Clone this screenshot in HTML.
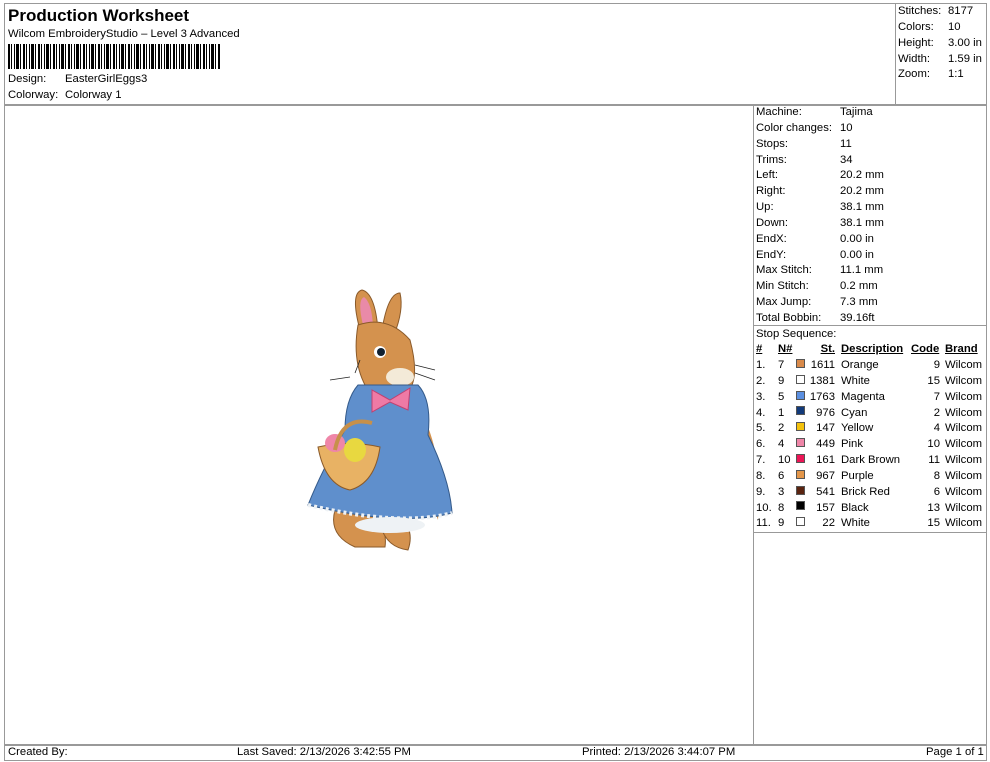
<!DOCTYPE html>
<html><head><meta charset="utf-8"><style>
body{margin:0;width:990px;height:762px;background:#fff;position:relative;font-family:"Liberation Sans",Arial,sans-serif;font-size:11.3px;color:#000;overflow:hidden}
.a{position:absolute;white-space:nowrap;line-height:13px}
.l{position:absolute;background:#999}
.r{text-align:right}
.u{text-decoration:underline;font-weight:bold}
.sw{position:absolute;width:9px;height:9px;border:1px solid #555;box-sizing:border-box}
</style></head><body>
<div class="l" style="left:4px;top:3px;width:983px;height:1px"></div>
<div class="l" style="left:4px;top:3px;width:1px;height:758px"></div>
<div class="l" style="left:986px;top:3px;width:1px;height:758px"></div>
<div class="l" style="left:4px;top:104px;width:983px;height:2px"></div>
<div class="l" style="left:895px;top:3px;width:1px;height:101px"></div>
<div class="l" style="left:753px;top:104px;width:1px;height:640px"></div>
<div class="l" style="left:753px;top:325px;width:233px;height:1px"></div>
<div class="l" style="left:753px;top:532px;width:233px;height:1px"></div>
<div class="l" style="left:4px;top:744px;width:983px;height:2px"></div>
<div class="l" style="left:4px;top:760px;width:983px;height:1px"></div>

<div class="a" style="left:8px;top:7px;font-size:17px;font-weight:bold;line-height:18px">Production Worksheet</div>
<div class="a" style="left:8px;top:28px">Wilcom EmbroideryStudio – Level 3 Advanced</div>
<div class="a" style="left:8px;top:44px;width:212px;height:25px;background:repeating-linear-gradient(90deg,#000 0 2px,#fff 2px 3px,#000 3px 4px,#fff 4px 6px,#000 6px 7px,#fff 7px 8px,#000 8px 11px,#fff 11px 12px,#000 12px 13px,#fff 13px 15px)"></div>
<div class="a" style="left:8px;top:73px">Design:</div><div class="a" style="left:65px;top:73px">EasterGirlEggs3</div>
<div class="a" style="left:8px;top:89px">Colorway:</div><div class="a" style="left:65px;top:89px">Colorway 1</div>

<div class="a" style="left:898px;top:5px">Stitches:</div><div class="a" style="left:948px;top:5px">8177</div>
<div class="a" style="left:898px;top:21px">Colors:</div><div class="a" style="left:948px;top:21px">10</div>
<div class="a" style="left:898px;top:37px">Height:</div><div class="a" style="left:948px;top:37px">3.00 in</div>
<div class="a" style="left:898px;top:53px">Width:</div><div class="a" style="left:948px;top:53px">1.59 in</div>
<div class="a" style="left:898px;top:68px">Zoom:</div><div class="a" style="left:948px;top:68px">1:1</div>

<div class="a" style="left:756px;top:105px;line-height:15.85px">Machine:<br>Color changes:<br>Stops:<br>Trims:<br>Left:<br>Right:<br>Up:<br>Down:<br>EndX:<br>EndY:<br>Max Stitch:<br>Min Stitch:<br>Max Jump:<br>Total Bobbin:<br>Stop Sequence:</div>
<div class="a" style="left:840px;top:105px;line-height:15.85px">Tajima<br>10<br>11<br>34<br>20.2 mm<br>20.2 mm<br>38.1 mm<br>38.1 mm<br>0.00 in<br>0.00 in<br>11.1 mm<br>0.2 mm<br>7.3 mm<br>39.16ft</div>

<div class="a u" style="left:756px;top:343px">#</div>
<div class="a u" style="left:778px;top:343px">N#</div>
<div class="a u r" style="left:805px;top:343px;width:30px">St.</div>
<div class="a u" style="left:841px;top:343px">Description</div>
<div class="a u" style="left:911px;top:343px">Code</div>
<div class="a u" style="left:945px;top:343px">Brand</div>

<div class="a" style="left:756px;top:358px;line-height:15.85px">1.<br>2.<br>3.<br>4.<br>5.<br>6.<br>7.<br>8.<br>9.<br>10.<br>11.</div>
<div class="a" style="left:778px;top:358px;line-height:15.85px">7<br>9<br>5<br>1<br>2<br>4<br>10<br>6<br>3<br>8<br>9</div>
<div class="a r" style="left:800px;top:358px;width:35px;line-height:15.85px">1611<br>1381<br>1763<br>976<br>147<br>449<br>161<br>967<br>541<br>157<br>22</div>
<div class="a" style="left:841px;top:358px;line-height:15.85px">Orange<br>White<br>Magenta<br>Cyan<br>Yellow<br>Pink<br>Dark Brown<br>Purple<br>Brick Red<br>Black<br>White</div>
<div class="a r" style="left:910px;top:358px;width:30px;line-height:15.85px">9<br>15<br>7<br>2<br>4<br>10<br>11<br>8<br>6<br>13<br>15</div>
<div class="a" style="left:945px;top:358px;line-height:15.85px">Wilcom<br>Wilcom<br>Wilcom<br>Wilcom<br>Wilcom<br>Wilcom<br>Wilcom<br>Wilcom<br>Wilcom<br>Wilcom<br>Wilcom</div>
<div class="sw" style="left:796px;top:359px;background:#d98a4a"></div>
<div class="sw" style="left:796px;top:375px;background:#fff"></div>
<div class="sw" style="left:796px;top:391px;background:#5b8fe0"></div>
<div class="sw" style="left:796px;top:406px;background:#123a7a"></div>
<div class="sw" style="left:796px;top:422px;background:#f4c20d"></div>
<div class="sw" style="left:796px;top:438px;background:#ef86a8"></div>
<div class="sw" style="left:796px;top:454px;background:#ec1556"></div>
<div class="sw" style="left:796px;top:470px;background:#e3964a"></div>
<div class="sw" style="left:796px;top:486px;background:#5a2410"></div>
<div class="sw" style="left:796px;top:501px;background:#000"></div>
<div class="sw" style="left:796px;top:517px;background:#fff"></div>

<svg style="position:absolute;left:300px;top:285px" width="160" height="280" viewBox="0 0 160 280">
<path d="M60 45 Q50 8 62 5 Q75 8 78 45 Z" fill="#d4924e" stroke="#8a5a2a"/>
<path d="M63 40 Q57 15 64 12 Q72 18 73 42 Z" fill="#e98aa8"/>
<path d="M82 45 Q88 8 100 8 Q104 25 94 50 Z" fill="#d4924e" stroke="#8a5a2a"/>
<path d="M58 40 Q88 30 110 55 Q118 85 112 100 Q90 108 65 100 Q52 75 58 40 Z" fill="#d4924e" stroke="#8a5a2a"/>
<ellipse cx="100" cy="92" rx="14" ry="9" fill="#f3ead8"/>
<circle cx="80" cy="67" r="6" fill="#fff"/><circle cx="81" cy="67" r="4" fill="#102030"/>
<path d="M50 92 L30 95 M55 88 L60 75 M115 80 L135 85 M115 88 L135 95" stroke="#222" stroke-width="0.8"/>
<path d="M35 225 Q28 250 55 262 L85 262 Q88 240 70 228 Z" fill="#d4924e" stroke="#8a5a2a"/>
<path d="M80 238 Q85 262 108 265 Q115 245 100 232 Z" fill="#d4924e" stroke="#8a5a2a"/>
<path d="M118 125 Q135 145 140 200 L138 235 L120 185 Z" fill="#d4924e"/>
<path d="M58 100 L118 100 Q132 115 128 150 Q150 195 152 228 Q100 242 8 220 Q22 185 45 145 Q45 115 58 100 Z" fill="#5f8fcc" stroke="#345a8a"/>
<path d="M8 220 Q100 242 152 228" fill="none" stroke="#eef2f5" stroke-width="4" stroke-dasharray="3 3"/>
<ellipse cx="90" cy="240" rx="35" ry="8" fill="#eef2f5"/>
<path d="M72 105 L90 115 L110 103 L108 125 L90 117 L72 127 Z" fill="#ef7aa5" stroke="#c04070"/>
<path d="M18 162 Q50 155 80 162 Q75 198 50 205 Q25 200 18 162 Z" fill="#e8b264" stroke="#8a5a2a"/>
<ellipse cx="35" cy="158" rx="10" ry="9" fill="#ef86a8"/>
<ellipse cx="55" cy="165" rx="11" ry="12" fill="#e8d840"/>
<path d="M35 165 Q42 130 72 138" fill="none" stroke="#c7904a" stroke-width="4"/>
</svg>

<div class="a" style="left:8px;top:746px">Created By:</div>
<div class="a" style="left:237px;top:746px">Last Saved: 2/13/2026 3:42:55 PM</div>
<div class="a" style="left:582px;top:746px">Printed: 2/13/2026 3:44:07 PM</div>
<div class="a" style="left:926px;top:746px">Page 1 of 1</div>
</body></html>
